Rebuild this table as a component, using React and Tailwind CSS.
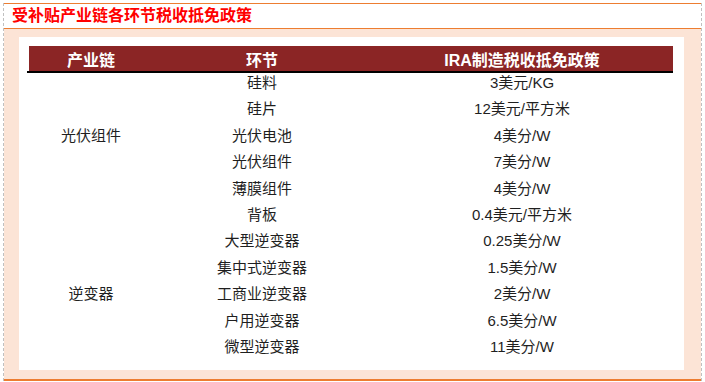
import React from 'react';

const rows = [
  { chain: '', step: '硅料', credit: '3美元/KG' },
  { chain: '', step: '硅片', credit: '12美元/平方米' },
  { chain: '光伏组件', step: '光伏电池', credit: '4美分/W' },
  { chain: '', step: '光伏组件', credit: '7美分/W' },
  { chain: '', step: '薄膜组件', credit: '4美分/W' },
  { chain: '', step: '背板', credit: '0.4美元/平方米' },
  { chain: '', step: '大型逆变器', credit: '0.25美分/W' },
  { chain: '', step: '集中式逆变器', credit: '1.5美分/W' },
  { chain: '逆变器', step: '工商业逆变器', credit: '2美分/W' },
  { chain: '', step: '户用逆变器', credit: '6.5美分/W' },
  { chain: '', step: '微型逆变器', credit: '11美分/W' },
];

const font = { fontFamily: '"Liberation Sans", "Noto Sans CJK SC", sans-serif' };

const App = () => {
  return (
    <div className="w-[705px] h-[382px] bg-white pt-[3px] pl-[3px]" style={font}>
      <div className="w-[699px] border-x border-dashed border-[#c0c0c0]">
        {/* Title */}
        <div className="h-[26px] border-y border-[#ED7D31] pl-[8px] flex items-center">
          <span className="text-[16px] leading-none text-[#ff0000] font-bold">
            受补贴产业链各环节税收抵免政策
          </span>
        </div>

        {/* Peach frame */}
        <div className="h-[350px] bg-[#FCE4D6] pl-[15px] pr-[17px] pt-[8px]">
          <div className="h-[333px] bg-white pt-[9px]">
            {/* Header */}
            <div className="ml-[10px] w-[644px] h-[25px] bg-[#8B2525] grid grid-cols-[124px_218px_302px] text-white font-bold text-[16px] leading-[25px] pt-[2px]">
              <div className="text-center">产业链</div>
              <div className="text-center">环节</div>
              <div className="text-center">IRA制造税收抵免政策</div>
            </div>
            <div className="ml-[8px] w-[646px] h-[2px] bg-black" />

            {/* Body */}
            <div className="ml-[10px] w-[644px]">
              {rows.map((r, i) => (
                <div
                  key={i}
                  className="grid grid-cols-[124px_218px_302px] h-[26.4px] text-[15px] leading-[20px] text-[#1f1f1f]"
                >
                  <div className="text-center">{r.chain}</div>
                  <div className="text-center">{r.step}</div>
                  <div className="text-center">{r.credit}</div>
                </div>
              ))}
            </div>
          </div>
        </div>

        <div className="h-[2px] bg-[#ED7D31]" />
      </div>
    </div>
  );
};

export default App;
